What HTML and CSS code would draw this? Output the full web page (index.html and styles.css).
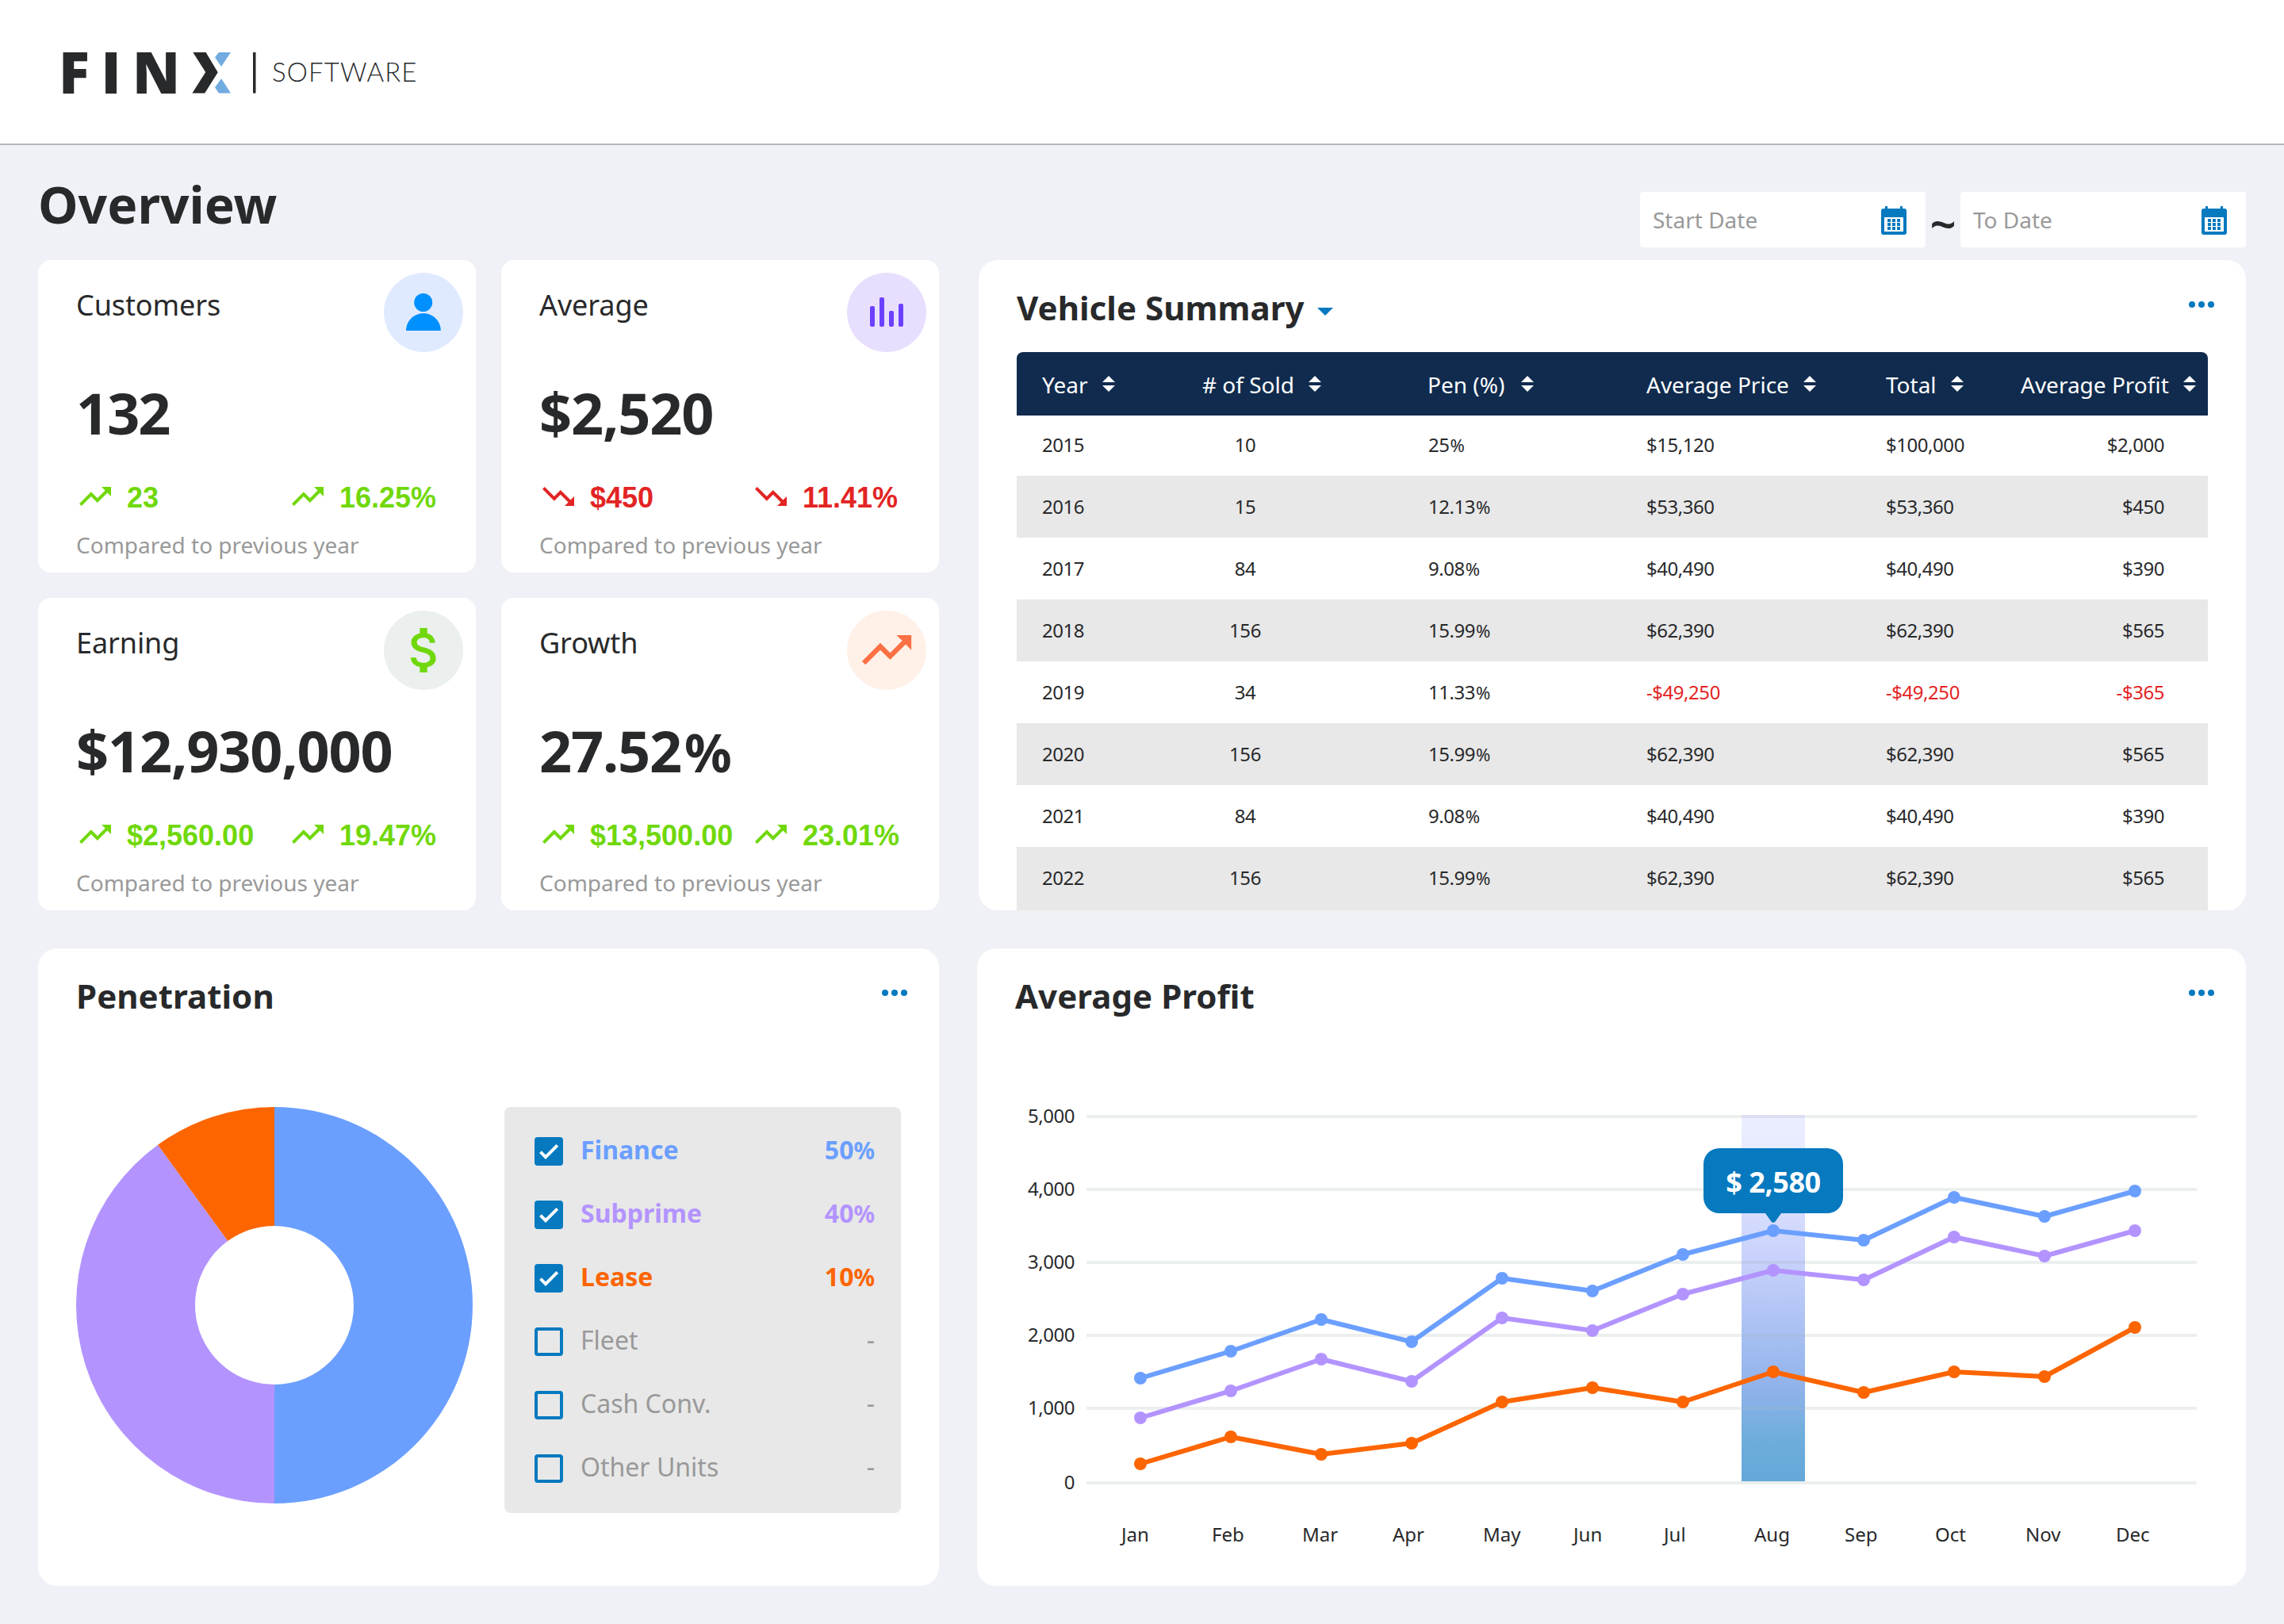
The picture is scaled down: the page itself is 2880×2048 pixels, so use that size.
FILE: index.html
```html
<!DOCTYPE html>
<html lang="en">
<head>
<meta charset="utf-8">
<title>FINX Software – Overview</title>
<link rel="stylesheet" href="styles.css">
</head>
<body>
<svg width="0" height="0" class="defs">
  <symbol id="up" viewBox="0 0 24 24"><path d="M16 6l2.29 2.29-4.88 4.88-4-4L2 16.59 3.41 18l6-6 4 4 6.3-6.29L22 12V6z"/></symbol>
  <symbol id="down" viewBox="0 0 24 24"><path d="M16 18l2.29-2.29-4.88-4.88-4 4L2 7.41 3.41 6l6 6 4-4 6.3 6.29L22 12v6z"/></symbol>
  <symbol id="more" viewBox="0 0 32 8"><circle cx="4" cy="4" r="4"/><circle cx="16" cy="4" r="4"/><circle cx="28" cy="4" r="4"/></symbol>
  <symbol id="sort" viewBox="0 0 16 20"><path d="M8 0l8 8H0zM8 20l8-8H0z"/></symbol>
  <symbol id="cal" viewBox="0 0 32 36"><path fill-rule="evenodd" d="M5 0h3v3h16V0h3v3h2a3 3 0 0 1 3 3v27a3 3 0 0 1-3 3H3a3 3 0 0 1-3-3V6a3 3 0 0 1 3-3h2zM4 14v18h24V14z"/><path d="M8 16h4v4H8zM14 16h4v4h-4zM20 16h4v4h-4zM8 21h4v4H8zM14 21h4v4h-4zM20 21h4v4h-4zM8 26h4v4H8zM14 26h4v4h-4zM20 26h4v4h-4z"/></symbol>
  <symbol id="on" viewBox="0 0 36 36"><rect width="36" height="36" rx="4"/><path d="M7.5 18.7l6.5 6.5 14.8-14.8" fill="none" stroke="#fff" stroke-width="4"/></symbol>
  <symbol id="off" viewBox="0 0 36 36"><rect x="2" y="2" width="32" height="32" rx="2" fill="none" stroke="#0679bf" stroke-width="4"/></symbol>
</svg>

<header class="topbar">
  <svg class="logo" width="480" height="120" viewBox="66 30 480 120">
    <text class="logo-name" x="74 127.500 167" y="117.5">FIN</text>
    <path fill="#28292b" d="M243.3 66h16.3l15.1 25.3-16.5 26.3h-15.8L259.2 91z"/>
    <path fill="#71abe0" d="M276 66h15l-12 18-8-11.700zM279 99l12 18.600h-15l-5-7.300z"/>
    <rect x="319" y="66" width="3.500" height="51.500" fill="#28292b"/>
    <text class="logo-sub" x="343" y="103" textLength="182.500">SOFTWARE</text>
  </svg>
</header>

<main class="page">
  <div class="titlebar">
    <h1>Overview</h1>
    <div class="dates">
      <div class="date"><span>Start Date</span><svg width="32" height="36"><use href="#cal"/></svg></div>
      <span class="tilde">~</span>
      <div class="date"><span>To Date</span><svg width="32" height="36"><use href="#cal"/></svg></div>
    </div>
  </div>

  <div class="row row-top">
    <section class="stats">
      <article class="stat">
        <div class="stat-head"><h2>Customers</h2><svg width="100" height="100"><circle cx="50" cy="50" r="50" fill="#e0eaff"/><g fill="#0090ff"><circle cx="49.700" cy="37.500" r="11.500"/><path d="M28 73a21.900 21.900 0 0 1 43.800 0z"/></g></svg></div>
        <p class="value tight">132</p>
        <div class="deltas good"><span><svg><use href="#up"/></svg>23</span><span><svg><use href="#up"/></svg>16.25%</span></div>
        <p class="note">Compared to previous year</p>
      </article>
      <article class="stat">
        <div class="stat-head"><h2>Average</h2><svg width="100" height="100"><circle cx="50" cy="50" r="50" fill="#e8dfff"/><g fill="#6c40ff"><rect x="29" y="42" width="6" height="26" rx="2"/><rect x="41" y="31" width="6" height="37" rx="2"/><rect x="53" y="48" width="6" height="20" rx="2"/><rect x="65" y="39" width="6" height="29" rx="2"/></g></svg></div>
        <p class="value">$2,520</p>
        <div class="deltas bad"><span><svg><use href="#down"/></svg>$450</span><span><svg><use href="#down"/></svg>11.41%</span></div>
        <p class="note">Compared to previous year</p>
      </article>
      <article class="stat">
        <div class="stat-head"><h2>Earning</h2><svg width="100" height="100"><circle cx="50" cy="50" r="50" fill="#ebefed"/><path fill="#70d80a" transform="translate(14.300 12.700) scale(3.110)" d="M11.800 10.900c-2.270-.59-3-1.200-3-2.150 0-1.090 1.010-1.850 2.700-1.850 1.780 0 2.440.85 2.500 2.100h2.210c-.07-1.720-1.120-3.300-3.210-3.810V3h-3v2.160c-1.940.42-3.500 1.680-3.500 3.610 0 2.310 1.910 3.460 4.700 4.130 2.500.6 3 1.480 3 2.410 0 .69-.49 1.790-2.700 1.790-2.060 0-2.870-.92-2.980-2.100h-2.200c.12 2.190 1.760 3.420 3.680 3.830V21h3v-2.150c1.950-.37 3.500-1.500 3.500-3.550 0-2.840-2.430-3.810-4.700-4.400z"/></svg></div>
        <p class="value">$12,930,000</p>
        <div class="deltas good"><span><svg><use href="#up"/></svg>$2,560.00</span><span><svg><use href="#up"/></svg>19.47%</span></div>
        <p class="note">Compared to previous year</p>
      </article>
      <article class="stat">
        <div class="stat-head"><h2>Growth</h2><svg width="100" height="100"><circle cx="50" cy="50" r="50" fill="#fff1e8"/><use href="#up" x="12.700" y="12.300" width="74.700" height="74.700" fill="#fb7044"/></svg></div>
        <p class="value">27.52<small>%</small></p>
        <div class="deltas good"><span><svg><use href="#up"/></svg>$13,500.00</span><span><svg><use href="#up"/></svg>23.01%</span></div>
        <p class="note">Compared to previous year</p>
      </article>
    </section>

    <section class="panel vehicles">
      <div class="panel-head"><h2>Vehicle Summary<svg class="caret" width="20" height="10"><path d="M0 0h20L10 10z"/></svg></h2><svg class="more"><use href="#more"/></svg></div>
      <div class="table">
        <div class="tr th"><span>Year<svg><use href="#sort"/></svg></span><span># of Sold<svg><use href="#sort"/></svg></span><span class="pen-col">Pen (%)<svg><use href="#sort"/></svg></span><span>Average Price<svg><use href="#sort"/></svg></span><span>Total<svg><use href="#sort"/></svg></span><span>Average Profit<svg><use href="#sort"/></svg></span></div>
        <div class="tr"><span>2015</span><span>10</span><span>25<small>%</small></span><span>$15,120</span><span>$100,000</span><span>$2,000</span></div>
        <div class="tr"><span>2016</span><span>15</span><span>12.13<small>%</small></span><span>$53,360</span><span>$53,360</span><span>$450</span></div>
        <div class="tr"><span>2017</span><span>84</span><span>9.08<small>%</small></span><span>$40,490</span><span>$40,490</span><span>$390</span></div>
        <div class="tr"><span>2018</span><span>156</span><span>15.99<small>%</small></span><span>$62,390</span><span>$62,390</span><span>$565</span></div>
        <div class="tr"><span>2019</span><span>34</span><span>11.33<small>%</small></span><span class="neg">-$49,250</span><span class="neg">-$49,250</span><span class="neg">-$365</span></div>
        <div class="tr"><span>2020</span><span>156</span><span>15.99<small>%</small></span><span>$62,390</span><span>$62,390</span><span>$565</span></div>
        <div class="tr"><span>2021</span><span>84</span><span>9.08<small>%</small></span><span>$40,490</span><span>$40,490</span><span>$390</span></div>
        <div class="tr"><span>2022</span><span>156</span><span>15.99<small>%</small></span><span>$62,390</span><span>$62,390</span><span>$565</span></div>
      </div>
    </section>
  </div>

  <div class="row row-bottom">
    <section class="panel penetration">
      <div class="panel-head"><h2>Penetration</h2><svg class="more"><use href="#more"/></svg></div>
      <div class="pen-body">
        <svg width="500" height="500" viewBox="-250 -250 500 500">
          <path fill="#6b9fff" d="M0-250a250 250 0 0 1 0 500V100a100 100 0 0 0 0-200z"/>
          <path fill="#b394ff" d="M0 250A250 250 0 0 1-146.950-202.250L-58.780-80.900A100 100 0 0 0 0 100z"/>
          <path fill="#fc6500" d="M-146.950-202.250A250 250 0 0 1 0-250V-100A100 100 0 0 0-58.780-80.900z"/>
        </svg>
        <ul class="legend">
          <li class="finance"><svg><use href="#on"/></svg><span>Finance</span><span>50<small>%</small></span></li>
          <li class="subprime"><svg><use href="#on"/></svg><span>Subprime</span><span>40<small>%</small></span></li>
          <li class="lease"><svg><use href="#on"/></svg><span>Lease</span><span>10<small>%</small></span></li>
          <li><svg><use href="#off"/></svg><span>Fleet</span><span>-</span></li>
          <li><svg><use href="#off"/></svg><span>Cash Conv.</span><span>-</span></li>
          <li><svg><use href="#off"/></svg><span>Other Units</span><span>-</span></li>
        </ul>
      </div>
    </section>

    <section class="panel profit">
      <div class="panel-head"><h2>Average Profit</h2><svg class="more"><use href="#more"/></svg></div>
      <svg class="chart" width="1504" height="600" viewBox="1280 1380 1504 600">
        <defs><linearGradient id="band" x1="0" y1="0" x2="0" y2="1"><stop offset="0" stop-color="#ebeeff"/><stop offset=".1" stop-color="#e8ebff"/><stop offset=".4" stop-color="#c8d1fb"/><stop offset=".75" stop-color="#8fb2ea"/><stop offset=".88" stop-color="#6eaddc"/><stop offset="1" stop-color="#64a8d9"/></linearGradient></defs>
        <path class="gridlines" d="M1370 1408h1400M1370 1500h1400M1370 1592h1400M1370 1684h1400M1370 1776h1400M1370 1870h1400"/>
        <rect x="2196" y="1406" width="80" height="462" fill="url(#band)"/>
        <path d="M2196 1408h80M2196 1500h80M2196 1592h80M2196 1684h80M2196 1776h80" stroke="#aab4c8" stroke-opacity=".25" stroke-width="4"/>
        <g class="axis digits end"><text x="1355" y="1416">5,000</text><text x="1355" y="1508">4,000</text><text x="1355" y="1600">3,000</text><text x="1355" y="1692">2,000</text><text x="1355" y="1784">1,000</text><text x="1355" y="1878">0</text></g>
        <g class="axis"><text x="1414" y="1944">Jan</text><text x="1528" y="1944">Feb</text><text x="1642" y="1944">Mar</text><text x="1756" y="1944">Apr</text><text x="1870" y="1944">May</text><text x="1984" y="1944">Jun</text><text x="2098" y="1944">Jul</text><text x="2212" y="1944">Aug</text><text x="2326" y="1944">Sep</text><text x="2440" y="1944">Oct</text><text x="2554" y="1944">Nov</text><text x="2668" y="1944">Dec</text></g>
        <g class="series s-finance"><polyline points="1438,1738 1552,1704 1666,1664 1780,1692 1894,1612 2008,1628 2122,1582 2236,1552 2350,1564 2464,1510 2578,1534 2692,1502"/></g>
        <g class="series s-subprime"><polyline points="1438,1788 1552,1754 1666,1714 1780,1742 1894,1662 2008,1678 2122,1632 2236,1602 2350,1614 2464,1560 2578,1584 2692,1552"/></g>
        <g class="series s-lease"><polyline points="1438,1846 1552,1812 1666,1834 1780,1820 1894,1768 2008,1750 2122,1768 2236,1730 2350,1756 2464,1730 2578,1736 2692,1674"/></g>
        <path fill="#0679bf" d="M2168 1448h136a20 20 0 0 1 20 20v42a20 20 0 0 1-20 20h-58l-7.500 10.500a3 3 0 0 1-5 0L2226 1530h-58a20 20 0 0 1-20-20v-42a20 20 0 0 1 20-20z"/>
        <text class="tip digits" x="2236" y="1504">$ 2,580</text>
      </svg>
    </section>
  </div>
</main>
<script src="chart.js"></script>
</body>
</html>
```
FILE: chart.js
```js
// Adds a round marker at every vertex of each chart series.
document.querySelectorAll('.series').forEach(function (group) {
  var points = group.querySelector('polyline').points;
  for (var i = 0; i < points.numberOfItems; i++) {
    var dot = document.createElementNS('http://www.w3.org/2000/svg', 'circle');
    dot.setAttribute('cx', points.getItem(i).x);
    dot.setAttribute('cy', points.getItem(i).y);
    dot.setAttribute('r', 8);
    group.appendChild(dot);
  }
});
```
FILE: styles.css
```css
* { box-sizing: border-box; margin: 0; padding: 0; }
body {
  width: 2880px;
  height: 2048px;
  overflow: hidden;
  background: #f0f1f6;
  color: #28292b;
  font-family: "Noto Sans", "Open Sans", sans-serif;
}
svg { display: block; flex: none; }
small { font-size: .92em; line-height: 0; }
.defs { display: none; }

.topbar { height: 183px; padding: 30px 66px 0; background: #fff; border-bottom: 2px solid #b5b6bb; }
.logo-name { font: 800 72px "Open Sans", sans-serif; fill: #28292b; }
.logo-sub { font: 300 33px "Lato", sans-serif; fill: #28292b; }

.page { padding: 0 48px; }
.titlebar { display: flex; justify-content: space-between; align-items: flex-start; height: 129px; }
h1 { margin-top: 31px; font-size: 64px; line-height: 88px; }
.dates { display: flex; margin-top: 59px; }
.date {
  display: flex;
  justify-content: space-between;
  width: 360px;
  height: 70px;
  padding: 18px 24px 0 16px;
  background: #fff;
  border-radius: 4px;
  color: #999;
  font-size: 28px;
  line-height: 34px;
}
.date svg { fill: #0679bf; }
.tilde { width: 44px; text-align: center; font-size: 58px; font-weight: 600; line-height: 79px; }

.row { display: flex; }
.row-top { margin-top: 16px; gap: 50px; height: 820px; }
.row-bottom { margin-top: 48px; gap: 48px; height: 804px; }

.stats { display: grid; grid-template-columns: 552px 552px; grid-template-rows: 394px 394px; gap: 32px; }
.stat { padding: 16px 16px 0 48px; background: #fff; border-radius: 16px; }
.stat-head { display: flex; justify-content: space-between; }
.stat-head h2 { margin-top: 17px; font-size: 36px; font-weight: 400; line-height: 48px; letter-spacing: -.1px; }
.value { margin-top: 28px; font-size: 72px; font-weight: 700; line-height: 96px; letter-spacing: -1.2px; }
.value.tight { letter-spacing: -2px; }
.value small { margin-left: 4px; }
.deltas {
  display: grid;
  grid-template-columns: 268px auto;
  margin-top: 34px;
  height: 48px;
  font: 700 36px/51px "Liberation Sans", Arial, sans-serif;
}
.deltas span { display: flex; gap: 16px; white-space: nowrap; }
.deltas svg { width: 48px; height: 48px; fill: currentColor; }
.good { color: #70d80a; }
.bad { color: #e32424; }
.note { margin-top: 18px; color: #999; font-size: 28px; line-height: 38px; }

.panel { padding: 32px 48px 0; background: #fff; border-radius: 24px; overflow: hidden; }
.panel-head { display: flex; justify-content: space-between; }
.panel-head h2 { display: flex; font-size: 42px; line-height: 56px; letter-spacing: .05px; }
.caret { margin: 28px 0 0 16px; fill: #0679bf; }
.more { width: 32px; height: 8px; margin: 20px -8px 0 0; fill: #0679bf; }
.vehicles, .profit { flex: 1; }
.penetration { width: 1136px; }

.table { margin-top: 28px; }
.tr {
  display: grid;
  grid-template-columns: 202px 284px 276px 302px 170px 182px;
  height: 78px;
  padding-left: 32px;
  font-size: 24px;
  line-height: 78px;
  letter-spacing: -.45px;
}
.tr:nth-child(2) { height: 76px; line-height: 74px; }
.tr:nth-child(odd) { background: #e8e8e8; }
.tr:last-child { height: 80px; }
.tr span { white-space: nowrap; }
.tr span:nth-child(2) { padding-right: 176px; text-align: center; }
.tr span:nth-child(3) { padding-left: 1px; }
.tr span:last-child { padding-right: 1px; text-align: right; }
.tr small { margin-left: 1px; }
.tr.th { height: 80px; background: #102b4e; border-radius: 8px 8px 0 0; color: #fff; font-size: 28px; line-height: 82px; letter-spacing: 0; }
.tr.th span { display: flex; gap: 18px; padding: 0; }
.tr.th .pen-col { gap: 21px; }
.tr.th svg { width: 16px; height: 20px; margin-top: 30px; fill: #fff; }
.neg { color: #e32424; }

.pen-body { display: flex; gap: 40px; margin-top: 112px; }
.legend {
  display: flex;
  flex-direction: column;
  gap: 44px;
  width: 500px;
  height: 512px;
  padding: 38px 33px 38px 38px;
  background: #e8e8e8;
  border-radius: 8px;
  list-style: none;
}
.legend li { display: flex; gap: 22px; height: 36px; color: #999; font-size: 32px; line-height: 32px; }
.legend svg { width: 36px; height: 36px; fill: #0679bf; }
.legend span:last-child { margin-left: auto; }
.legend .finance, .legend .subprime, .legend .lease { font-weight: 700; }
.legend .finance { color: #6b9fff; }
.legend .subprime { color: #b394ff; }
.legend .lease { color: #fc6500; }

.chart { margin-top: 96px; }
.gridlines { stroke: #ebefee; stroke-width: 4; }
.axis { font-size: 24px; fill: #28292b; }
.end { text-anchor: end; }
.digits { letter-spacing: -.45px; }
.series polyline { fill: none; stroke: currentColor; stroke-width: 6; stroke-linejoin: round; }
.series { fill: currentColor; }
.s-finance { color: #6b9fff; }
.s-subprime { color: #b394ff; }
.s-lease { color: #fc6500; }
.tip { fill: #fff; font-size: 36px; font-weight: 700; text-anchor: middle; }
```
